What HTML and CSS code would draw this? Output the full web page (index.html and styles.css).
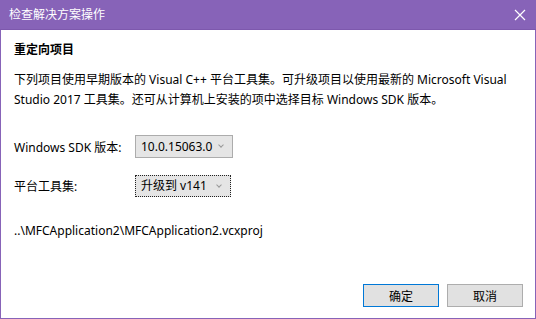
FILE: index.html
```html
<!DOCTYPE html>
<html lang="zh-CN">
<head>
  <meta charset="UTF-8" />
  <title>检查解决方案操作</title>
  <link rel="stylesheet" href="styles.css">
</head>
<body>

<div class="dialog">
  <div class="titlebar">
    <span class="title">检查解决方案操作</span>
    <span class="close">
      <svg width="12" height="12" viewBox="0 0 12 12">
        <path d="M1 1 L11 11 M11 1 L1 11" stroke="#fff" stroke-width="1.2" fill="none"/>
      </svg>
    </span>
  </div>

  <div class="content">
    <h2>重定向项目</h2>
    <p>
      下列项目使用早期版本的 Visual C++ 平台工具集。可升级项目以使用最新的 Microsoft Visual<br>
      Studio 2017 工具集。还可从计算机上安装的项中选择目标 Windows SDK 版本。
    </p>

    <div class="form">
      <label>Windows SDK 版本:</label>
      <div class="select sdk">10.0.15063.0<span class="arrow"></span></div>
      <label>平台工具集:</label>
      <div class="select toolset focused">升级到 v141<span class="arrow"></span></div>
    </div>

    <div class="path">..\MFCApplication2\MFCApplication2.vcxproj</div>

    <div class="buttons">
      <button class="btn default">确定</button>
      <button class="btn">取消</button>
    </div>
  </div>
</div>

</body>
</html>
```

FILE: styles.css
```css
* {
  box-sizing: border-box;
  margin: 0;
  padding: 0;
}

body {
  width: 536px;
  height: 319px;
  font-family: 'Noto Sans', 'Noto Sans CJK SC', sans-serif;
  font-size: 12px;
  color: #000;
  background: #fff;
}

.dialog {
  width: 536px;
  height: 319px;
  display: flex;
  flex-direction: column;
  border: 1px solid #8763b8;
  border-top: none;
  background: #fff;
}

.titlebar {
  height: 30px;
  background: #8763b8;
  border-bottom: 1px solid #7d58ad;
  display: flex;
  align-items: center;
  justify-content: space-between;
  padding: 0 10px 0 9px;
  color: #fff;
  margin: 0 -1px;
}

.title {
  font-size: 12px;
  line-height: 16px;
}

.close {
  display: flex;
  width: 12px;
  height: 12px;
}

.content {
  flex: 1;
  display: flex;
  flex-direction: column;
  padding: 0 12px 11px 13px;
}

.content h2 {
  font-size: 12px;
  font-weight: 700;
  line-height: 20px;
  margin-top: 10px;
}

.content p {
  line-height: 20px;
  margin-top: 10px;
  white-space: nowrap;
}

.form {
  display: grid;
  grid-template-columns: 121px auto;
  row-gap: 17px;
  align-items: center;
  justify-items: start;
  margin-top: 25px;
}

.select {
  position: relative;
  height: 23px;
  line-height: 21px;
  background: #e5e5e5;
  border: 1px solid #acacac;
  padding: 0 22px 0 5px;
}

.select.sdk {
  width: 98px;
}

.select.toolset {
  width: 96px;
  height: 22px;
  line-height: 20px;
}

.select.focused {
  border: 1px dotted #222;
}

.arrow {
  position: absolute;
  right: 9px;
  top: 7px;
  width: 4px;
  height: 4px;
  border-right: 1px solid #999;
  border-bottom: 1px solid #999;
  transform: rotate(45deg);
}

.path {
  line-height: 20px;
  margin-top: 24px;
}

.buttons {
  margin-top: auto;
  display: flex;
  justify-content: flex-end;
  gap: 8px;
}

.btn {
  width: 76px;
  height: 23px;
  font-family: 'Noto Sans', 'Noto Sans CJK SC', sans-serif;
  font-size: 12px;
  background: #e1e1e1;
  border: 1px solid #adadad;
  color: #000;
}

.btn.default {
  border: 1px solid #0078d7;
}
```
